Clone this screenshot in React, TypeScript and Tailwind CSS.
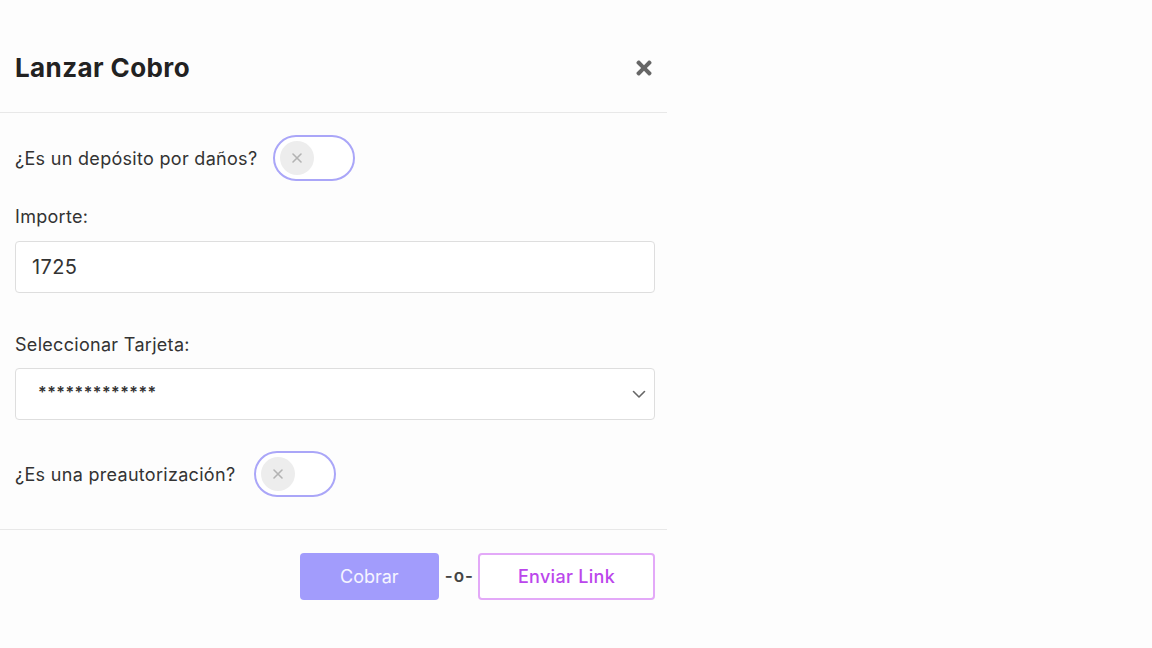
import { FaTimes } from "react-icons/fa";

function Toggle() {
  return (
    <button
      type="button"
      className="flex h-[46px] w-[82px] items-center rounded-full border-2 border-[#aaa6f8] bg-white px-[5px]">
      <span className="flex h-[34px] w-[34px] items-center justify-center rounded-full bg-[#ededed]">
        <svg width="12" height="12" viewBox="0 0 12 12" fill="none">
          <path
            d="M2 2L10 10M10 2L2 10"
            stroke="#b3b3b3"
            strokeWidth="1.6"
            strokeLinecap="round"
          />
        </svg>
      </span>
    </button>
  );
}

export default function App() {
  return (
    <div className="min-h-screen bg-[#fdfdfd] font-['Inter',sans-serif] text-[#333]">
      <div className="w-[667px] pt-[46px]">
        {/* Header */}
        <div className="flex items-center justify-between border-b border-[#e8e8e8] pb-[22px] pl-[15px] pr-[12px]">
          <h2 className="text-[26px] font-bold leading-[44px] tracking-[0.4px] text-[#222]">
            Lanzar Cobro
          </h2>
          <FaTimes size={22} className="text-[#666]" />
        </div>

        {/* Body */}
        <div className="flex flex-col pl-[15px] pr-[12px] pt-[22px]">
          <div className="flex items-center gap-[16px]">
            <span className="text-[18px] tracking-[0.3px]">¿Es un depósito por daños?</span>
            <Toggle />
          </div>

          <label className="mt-[24px] text-[18px] leading-[24px] tracking-[0.3px]">Importe:</label>
          <div className="mt-[12px] flex h-[52px] items-center rounded border border-[#dedede] bg-white px-[16px] text-[20px] tracking-[0.4px] text-[#333]">
            1725
          </div>

          <label className="mt-[40px] text-[18px] leading-[24px] tracking-[0.3px]">
            Seleccionar Tarjeta:
          </label>
          <div className="mt-[11px] flex h-[52px] items-center justify-between rounded border border-[#dedede] bg-white pl-[22px] pr-[6px]">
            <span className="pb-[4px] text-[16px] font-semibold tracking-[0.5px] text-[#333]">
              *************
            </span>
            <svg width="18" height="18" viewBox="0 0 18 18" fill="none">
              <path
                d="M3.5 6.5L9 12L14.5 6.5"
                stroke="#666"
                strokeWidth="1.6"
                strokeLinecap="round"
                strokeLinejoin="round"
              />
            </svg>
          </div>

          <div className="mt-[31px] flex items-center gap-[19px]">
            <span className="text-[18px] tracking-[0.3px]">¿Es una preautorización?</span>
            <Toggle />
          </div>
        </div>

        {/* Footer */}
        <div className="mt-[32px] flex items-center justify-end border-t border-[#e8e8e8] pr-[12px] pt-[23px]">
          <button
            type="button"
            className="h-[47px] w-[139px] rounded bg-[#a29cfc] text-[18px] text-white/90">
            Cobrar
          </button>
          <span className="ml-[6px] mr-[4px] text-[17px] font-semibold tracking-[1px] text-[#444]">-o-</span>
          <button
            type="button"
            className="h-[47px] w-[177px] rounded border-2 border-[#e3a9f8] bg-white text-[18px] font-medium tracking-[0.3px] text-[#bb46ec]">
            Enviar Link
          </button>
        </div>
      </div>
    </div>
  );
}
